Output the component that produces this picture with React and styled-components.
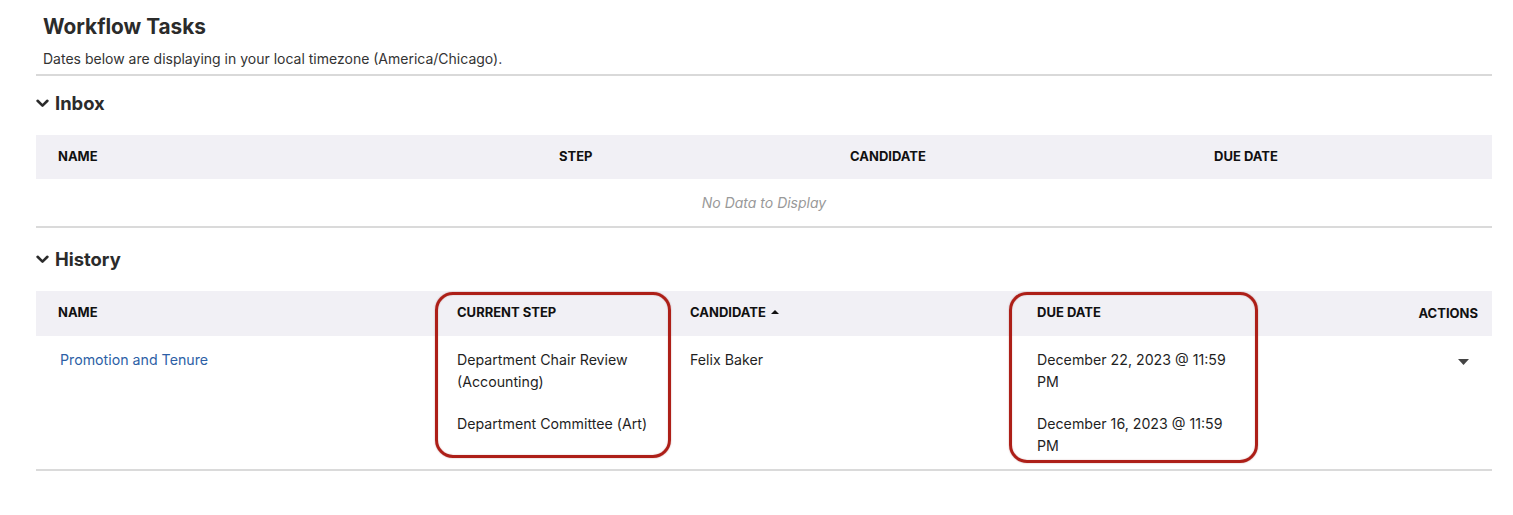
import React from "react";
import styled, { createGlobalStyle } from "styled-components";

const Global = createGlobalStyle`
  html, body { margin: 0; padding: 0; background: #fff; }
  body { font-family: Inter, "Noto Sans", "Liberation Sans", sans-serif; color: #222; }
  * { box-sizing: border-box; }
`;

const Page = styled.div`
  padding: 0 21px 40px 36px;
  width: 1513px;
`;

const TitleBlock = styled.header`
  padding: 15px 0 5px 7px;
  border-bottom: 2px solid #d9d9d9;
`;

const Title = styled.h1`
  margin: 0;
  font-size: 20.8px;
  line-height: 24px;
  font-weight: 700;
  color: #2b2b2b;
`;

const Subtitle = styled.p`
  margin: 10px 0 0;
  font-size: 14px;
  line-height: 20px;
  color: #333;
`;

const SectionHeading = styled.h2`
  display: flex;
  align-items: center;
  gap: 6px;
  margin: ${(p) => p.$top}px 0 20px;
  font-size: 18.4px;
  line-height: 24px;
  font-weight: 700;
  color: #2b2b2b;
`;

const TableWrap = styled.div`
  position: relative;
  border-bottom: 2px solid #dadada;
`;

const Table = styled.table`
  width: 100%;
  table-layout: fixed;
  border-collapse: collapse;
`;

const HeadRow = styled.tr`
  background: #f1f0f5;
  height: ${(p) => p.$h}px;
`;

const Th = styled.th`
  text-align: ${(p) => p.$align || "left"};
  padding: 0 ${(p) => p.$pr || 12}px ${(p) => p.$pb ?? 2}px 22px;
  font-size: 13px;
  font-weight: 700;
  color: #111;
  white-space: nowrap;
  vertical-align: middle;
`;

const SortLabel = styled.span`
  display: inline-flex;
  align-items: center;
  gap: 5px;
`;

const EmptyCell = styled.td`
  height: 47px;
  padding-bottom: 1px;
  text-align: center;
  font-size: 14px;
  font-style: italic;
  color: #999;
`;

const Td = styled.td`
  vertical-align: top;
  padding: 13px ${(p) => p.$pr || 12}px 12px 22px;
  font-size: 14.2px;
  line-height: 22px;
  color: #1f1f1f;
  text-align: ${(p) => p.$align || "left"};
`;

const Item = styled.div`
  & + & { margin-top: 20px; }
`;

const Link = styled.a`
  color: #2d5fa6;
  text-decoration: none;
  padding-left: 2px;
`;

const ActionButton = styled.button`
  border: 0;
  background: transparent;
  padding: 0 9px 0 0;
  margin-top: 2px;
  cursor: pointer;
  line-height: 0;
`;

const Highlight = styled.div`
  position: absolute;
  top: 1px;
  left: ${(p) => p.$left}px;
  width: ${(p) => p.$w}px;
  height: ${(p) => p.$h}px;
  border: 3.5px solid #ad1f18;
  border-radius: 18px;
  box-shadow: 0 0 1.5px rgba(120, 0, 0, 0.45), inset 0 0 1.5px rgba(120, 0, 0, 0.35);
  pointer-events: none;
`;

const Chevron = () => (
  <svg width="13" height="9" viewBox="0 0 13 9">
    <path d="M1.6 1.8 L6.5 6.6 L11.4 1.8" fill="none" stroke="#2b2b2b" strokeWidth="2.6" strokeLinecap="round" strokeLinejoin="round" />
  </svg>
);

const SortUp = () => (
  <svg width="8" height="5" viewBox="0 0 8 5">
    <path d="M0 5 L4 1 L8 5 Z" fill="#111" />
  </svg>
);

const CaretDown = () => (
  <svg width="11" height="6" viewBox="0 0 11 6">
    <path d="M0 0 H11 L5.5 6 Z" fill="#444" />
  </svg>
);

export default function App() {
  return (
    <Page>
      <Global />
      <TitleBlock>
        <Title>Workflow Tasks</Title>
        <Subtitle>Dates below are displaying in your local timezone (America/Chicago).</Subtitle>
      </TitleBlock>

      <SectionHeading $top={15}>
        <Chevron />
        Inbox
      </SectionHeading>
      <TableWrap>
        <Table>
          <colgroup>
            <col style={{ width: 501 }} />
            <col style={{ width: 291 }} />
            <col style={{ width: 364 }} />
            <col style={{ width: 300 }} />
          </colgroup>
          <thead>
            <HeadRow $h={44}>
              <Th>NAME</Th>
              <Th>STEP</Th>
              <Th>CANDIDATE</Th>
              <Th>DUE DATE</Th>
            </HeadRow>
          </thead>
          <tbody>
            <tr>
              <EmptyCell colSpan={4}>No Data to Display</EmptyCell>
            </tr>
          </tbody>
        </Table>
      </TableWrap>

      <SectionHeading $top={19}>
        <Chevron />
        History
      </SectionHeading>
      <TableWrap>
        <Table>
          <colgroup>
            <col style={{ width: 399 }} />
            <col style={{ width: 233 }} />
            <col style={{ width: 347 }} />
            <col style={{ width: 235 }} />
            <col style={{ width: 242 }} />
          </colgroup>
          <thead>
            <HeadRow $h={45}>
              <Th $pb={4}>NAME</Th>
              <Th $pb={4}>CURRENT STEP</Th>
              <Th $pb={4}>
                <SortLabel>
                  CANDIDATE
                  <SortUp />
                </SortLabel>
              </Th>
              <Th $pb={4}>DUE DATE</Th>
              <Th $pb={2} $align="right" $pr={14}>ACTIONS</Th>
            </HeadRow>
          </thead>
          <tbody>
            <tr>
              <Td>
                <Link href="#">Promotion and Tenure</Link>
              </Td>
              <Td $pr={10}>
                <Item>Department Chair Review (Accounting)</Item>
                <Item>Department Committee (Art)</Item>
              </Td>
              <Td>Felix Baker</Td>
              <Td $pr={14}>
                <Item>December 22, 2023 @ 11:59 PM</Item>
                <Item>December 16, 2023 @ 11:59 PM</Item>
              </Td>
              <Td $align="right" $pr={14}>
                <ActionButton aria-label="Actions">
                  <CaretDown />
                </ActionButton>
              </Td>
            </tr>
          </tbody>
        </Table>
        <Highlight $left={399} $w={236} $h={166} />
        <Highlight $left={973} $w={249} $h={171} />
      </TableWrap>
    </Page>
  );
}
